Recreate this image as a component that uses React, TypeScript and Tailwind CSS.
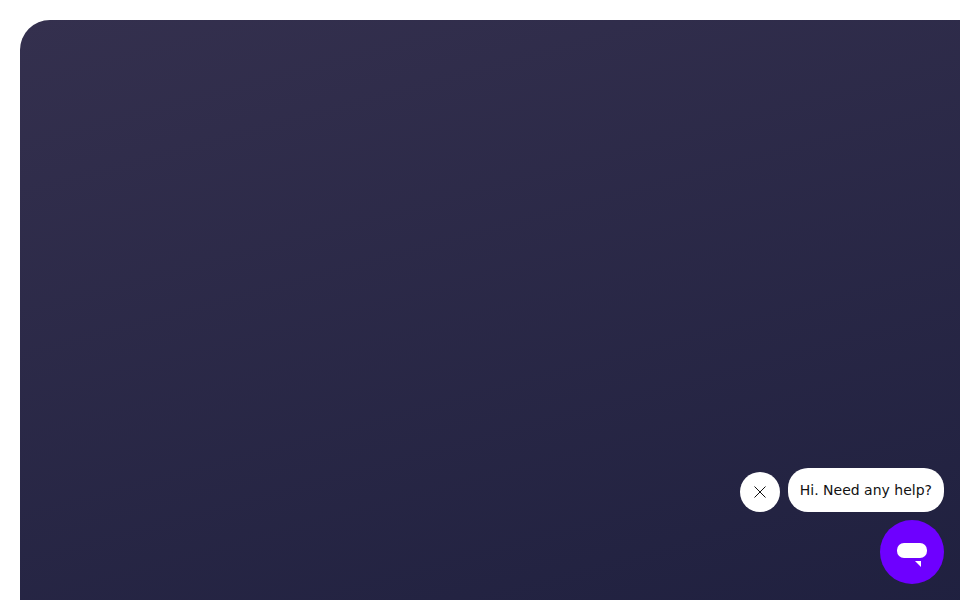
export default function App() {
  return (
    <div className="h-[600px] w-[960px] overflow-hidden bg-white pl-5 pt-5 font-['DejaVu_Sans',sans-serif]">
      {/* Hero panel, runs off the right and bottom edges */}
      <div className="h-[600px] w-[960px] rounded-tl-[30px] bg-[linear-gradient(165deg,#34304e,#1f203f)]" />

      {/* Chat widget */}
      <div className="fixed bottom-4 right-4 flex flex-col items-end gap-2">
        <div className="flex items-end gap-2">
          <button className="flex h-10 w-10 items-center justify-center rounded-full bg-white">
            <svg width="12" height="12" viewBox="0 0 12 12" fill="none" stroke="#111" strokeWidth="1">
              <path d="M0.5 0.5L11.5 11.5M11.5 0.5L0.5 11.5" />
            </svg>
          </button>
          <div className="flex h-11 items-center rounded-[20px] bg-white px-3 text-sm text-[#111]">
            Hi. Need any help?
          </div>
        </div>
        <button className="flex h-16 w-16 items-center justify-center rounded-full bg-[#6e00ff]">
          <svg width="30" height="24" viewBox="0 0 30 24" fill="#fff" className="mt-1.5">
            <rect x="0" y="0" width="30" height="15" rx="7" />
            <path d="M18 18H24V24Z" />
          </svg>
        </button>
      </div>
    </div>
  );
}
